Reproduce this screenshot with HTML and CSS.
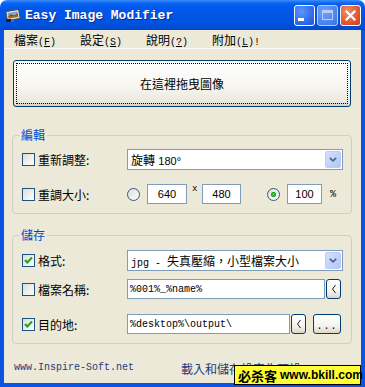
FILE: index.html
```html
<!DOCTYPE html>
<html lang="zh-TW">
<head>
    <meta charset="UTF-8">
    <title>Easy Image Modifier</title>
    <link rel="stylesheet" href="styles.css">
</head>
<body>
    <div class="window">
        <div class="titlebar">
            <svg class="app-icon" viewBox="0 0 16 16">
                <g transform="rotate(-10 8 8)">
                    <rect x="1.5" y="3.5" width="13" height="9" fill="#e9e9e4" stroke="#4a4a4a"/>
                    <rect x="3" y="5" width="10" height="3" fill="#7fa3d8"/>
                    <rect x="3" y="8" width="10" height="3" fill="#a8692c"/>
                    <path d="M3 9 L6 7 L9 9 L13 7 L13 9 Z" fill="#6e4a22"/>
                </g>
                <rect x="1" y="12" width="5" height="3" fill="#222"/>
                <rect x="6" y="13" width="3" height="2" fill="#3a6fd8"/>
            </svg>
            <span class="title">Easy Image Modifier</span>
            <div class="caption-buttons">
                <span class="cap-btn cap-min"><i></i></span>
                <span class="cap-btn cap-max"><i></i></span>
                <span class="cap-btn cap-close">
                    <svg viewBox="0 0 11 11"><path d="M1.5 1.5 L9.5 9.5 M9.5 1.5 L1.5 9.5" stroke="#fff" stroke-width="2.2" stroke-linecap="square"/></svg>
                </span>
            </div>
        </div>

        <div class="frame">
            <div class="menubar">
                <span class="menu-item">檔案<span class="key">(<u>F</u>)</span></span>
                <span class="menu-item">設定<span class="key">(<u>S</u>)</span></span>
                <span class="menu-item">說明<span class="key">(<u>?</u>)</span></span>
                <span class="menu-item">附加<span class="key">(<u>L</u>)!</span></span>
            </div>

            <div class="client">
                <button class="drop-zone"><span>在這裡拖曳圖像</span></button>

                <fieldset class="group group-edit">
                    <legend>編輯</legend>
                    <div class="row row-combo">
                        <label class="opt"><span class="box"></span>重新調整:</label>
                        <div class="combo">
                            <span class="combo-text">旋轉 <span class="num-font">180°</span></span>
                            <span class="combo-btn">
                                <svg viewBox="0 0 8 5"><path d="M0.8 0.8 L4 3.8 L7.2 0.8" fill="none" stroke="#4d6185" stroke-width="1.6"/></svg>
                            </span>
                        </div>
                    </div>
                    <div class="row row-gap">
                        <label class="opt"><span class="box"></span>重調大小:</label>
                        <span class="radio"></span>
                        <span class="field num w-640">640</span>
                        <span class="times">x</span>
                        <span class="field num w-480">480</span>
                        <span class="radio on"></span>
                        <span class="field num w-100">100</span>
                        <span class="unit">%</span>
                    </div>
                </fieldset>

                <fieldset class="group group-save">
                    <legend>儲存</legend>
                    <div class="row row-combo">
                        <label class="opt"><span class="box checked">
                            <svg viewBox="0 0 11 11"><path d="M2 5 L4.3 7.5 L9 2.5" fill="none" stroke="#21a121" stroke-width="2"/></svg>
                        </span>格式:</label>
                        <div class="combo">
                            <span class="combo-text"><span class="mono">jpg - </span>失真壓縮，小型檔案大小</span>
                            <span class="combo-btn">
                                <svg viewBox="0 0 8 5"><path d="M0.8 0.8 L4 3.8 L7.2 0.8" fill="none" stroke="#4d6185" stroke-width="1.6"/></svg>
                            </span>
                        </div>
                    </div>
                    <div class="row row-tight">
                        <label class="opt"><span class="box"></span>檔案名稱:</label>
                        <span class="field text w-name"><span class="mono">%001%_%name%</span></span>
                        <span class="xp-btn arrow-btn">
                            <svg viewBox="0 0 6 10"><path d="M4.5 1 L1.5 5 L4.5 9" fill="none" stroke="#222" stroke-width="1"/></svg>
                        </span>
                    </div>
                    <div class="row row-gap">
                        <label class="opt"><span class="box checked">
                            <svg viewBox="0 0 11 11"><path d="M2 5 L4.3 7.5 L9 2.5" fill="none" stroke="#21a121" stroke-width="2"/></svg>
                        </span>目的地:</label>
                        <span class="field text w-dest"><span class="mono">%desktop%\output\</span></span>
                        <span class="xp-btn arrow-btn">
                            <svg viewBox="0 0 6 10"><path d="M4.5 1 L1.5 5 L4.5 9" fill="none" stroke="#222" stroke-width="1"/></svg>
                        </span>
                        <span class="xp-btn browse-btn">...</span>
                    </div>
                </fieldset>

                <div class="footer">
                    <span class="site">www.Inspire-Soft.net</span>
                    <span class="defaults">載入和儲存設定為預設?</span>
                </div>
            </div>
        </div>

        <div class="watermark"><b class="wm-cn">必杀客</b> <b class="wm-url">www.bkill.com</b></div>
    </div>
</body>
</html>
```

FILE: styles.css
```css
body {
    margin: 0;
    background: #fff;
}
.window {
    position: relative;
    width: 365px;
    height: 387px;
    display: flex;
    flex-direction: column;
    font-family: "Liberation Sans", "Noto Sans CJK TC", sans-serif;
    font-size: 12px;
    color: #000;
}

/* title bar */
.titlebar {
    height: 30px;
    flex: none;
    display: flex;
    align-items: center;
    padding: 0 4px 0 5px;
    border-radius: 7px 7px 0 0;
    background: linear-gradient(to bottom, #3d8ff7 0, #1a72f6 2px, #0560f0 4px, #0058ec 9px, #0055e5 18px, #0051dc 25px, #0049cb 30px);
}
.app-icon {
    width: 16px;
    height: 16px;
    flex: none;
}
.title {
    margin-left: 4px;
    font: bold 13px "Liberation Mono", monospace;
    color: #fff;
    text-shadow: 1px 1px #0b2a8c;
}
.caption-buttons {
    margin-left: auto;
    display: flex;
    gap: 2px;
}
.cap-btn {
    width: 21px;
    height: 21px;
    box-sizing: border-box;
    border: 1px solid #fff;
    border-radius: 3px;
    display: flex;
    align-items: center;
    justify-content: center;
    background: radial-gradient(circle at 35% 30%, #5b95ff, #2a66e8 70%, #1c55d6);
}
.cap-min i {
    width: 6px;
    height: 3px;
    background: #fff;
    margin: 9px 7px 0 0;
}
.cap-max {
    border-color: #b9cdf7;
    background: radial-gradient(circle at 35% 30%, #6fa2fb, #4a80ea 70%, #3b70e0);
}
.cap-max i {
    width: 11px;
    height: 10px;
    box-sizing: border-box;
    border: 1px solid #b9cdf7;
    border-top-width: 3px;
}
.cap-close {
    background: radial-gradient(circle at 35% 30%, #f08e6c, #e0532b 65%, #c8401c);
}
.cap-close svg {
    width: 11px;
    height: 11px;
}

/* frame */
.frame {
    flex: 1;
    display: flex;
    flex-direction: column;
    background: #ece9d8;
    border: 4px solid #0a54e4;
    border-top: 0;
}
.menubar {
    height: 18px;
    flex: none;
    display: flex;
    align-items: center;
    padding-left: 10px;
    border-bottom: 1px solid #fbfaf6;
}
.menu-item {
    width: 66px;
}
.key {
    font: 10px "Liberation Mono", monospace;
}
.client {
    padding: 11px 9px 0 8px;
}

/* drop zone */
.drop-zone {
    display: flex;
    width: calc(100% - 2px);
    height: 47px;
    margin: 0 1px;
    padding: 2px;
    border: 1px solid #003c74;
    border-radius: 3px;
    background: linear-gradient(to bottom, #fff 0, #f7f6f1 55%, #ebe8de 90%, #d9d4c6 100%);
    font: inherit;
    color: #000;
}
.drop-zone span {
    flex: 1;
    display: flex;
    align-items: center;
    justify-content: center;
    border: 1px dotted #000;
    font-family: "Noto Sans CJK TC", sans-serif;
}

/* group boxes */
.group {
    margin: 21px 0 0;
    padding: 7px 8px 9px 9px;
    border: 1px solid #d0d0bf;
    border-radius: 4px;
    min-width: 0;
}
.group-save {
    margin-top: 14px;
    padding-top: 8px;
}
.group legend {
    padding: 0 2px;
    margin-left: -3px;
    line-height: 14px;
    color: #0046d5;
    font-family: "Noto Sans CJK TC", sans-serif;
}
.row {
    display: flex;
    align-items: center;
    height: 20px;
}
.row-combo {
    height: 21px;
}
.row-gap {
    margin-top: 14px;
}
.group-save .row-gap {
    margin-top: 15px;
}
.row-tight {
    margin-top: 8px;
}
.opt {
    width: 105px;
    flex: none;
    display: flex;
    align-items: center;
    gap: 3px;
    font-family: "Noto Sans CJK TC", sans-serif;
}
.box {
    width: 13px;
    height: 13px;
    box-sizing: border-box;
    border: 1px solid #1c5180;
    background: linear-gradient(135deg, #dcdcd7, #fff);
    display: flex;
}
.box svg {
    width: 11px;
    height: 11px;
}
.radio {
    width: 13px;
    height: 13px;
    flex: none;
    box-sizing: border-box;
    border: 1px solid #2f5a86;
    border-radius: 50%;
    background: linear-gradient(135deg, #dcdcd7, #fff);
    margin-right: 7px;
}
.radio.on {
    margin-left: 26px;
    background: radial-gradient(circle, #5ad85a 0, #21a121 2.2px, transparent 3px), linear-gradient(135deg, #dcdcd7, #fff);
}
.combo {
    width: 216px;
    height: 21px;
    box-sizing: border-box;
    border: 1px solid #7f9db9;
    background: #fff;
    display: flex;
    align-items: center;
    padding: 1px 1px 1px 3px;
}
.combo-text {
    flex: 1;
    white-space: nowrap;
}
.combo-btn {
    width: 16px;
    height: 17px;
    box-sizing: border-box;
    border: 1px solid #b9cdf8;
    border-radius: 2px;
    background: linear-gradient(135deg, #d4e1fd, #b3c7f4);
    display: flex;
    align-items: center;
    justify-content: center;
}
.combo-btn svg {
    width: 8px;
    height: 5px;
}
.num-font {
    font: 11px "Liberation Sans", sans-serif;
}
.mono {
    font: 10px "Liberation Mono", monospace;
}
.field {
    height: 20px;
    flex: none;
    box-sizing: border-box;
    border: 1px solid #7f9db9;
    background: #fff;
    display: flex;
    align-items: center;
}
.num {
    justify-content: center;
    font-size: 11px;
}
.text {
    padding-left: 2px;
}
.w-640 { width: 40px; }
.w-480 { width: 39px; }
.w-100 { width: 35px; }
.w-name { width: 198px; }
.w-dest { width: 163px; }
.times {
    align-self: flex-start;
    width: 6px;
    margin: 0 4px 0 5px;
    font: 9px "Liberation Mono", monospace;
}
.unit {
    margin-left: 8px;
    font: 10px "Liberation Mono", monospace;
}
.xp-btn {
    height: 20px;
    box-sizing: border-box;
    border: 1px solid #003c74;
    border-radius: 3px;
    background: linear-gradient(to bottom, #fff 0, #f4f3ee 60%, #dcd7c8 100%);
    display: flex;
    align-items: center;
    justify-content: center;
}
.arrow-btn {
    width: 15px;
    margin-left: 1px;
}
.arrow-btn svg {
    width: 6px;
    height: 10px;
}
.browse-btn {
    width: 28px;
    margin-left: 7px;
    padding-top: 4px;
    font: 10px "Liberation Mono", monospace;
    letter-spacing: 1px;
}

/* footer */
.footer {
    display: flex;
    margin-top: 18px;
    padding-left: 2px;
    line-height: 14px;
    color: #24397f;
}
.site {
    width: 167px;
    font: 10px "Liberation Mono", monospace;
}
.defaults {
    font-family: "Noto Sans CJK TC", sans-serif;
}

/* overlay stamp */
.watermark {
    position: absolute;
    left: 234px;
    top: 365px;
    width: 127px;
    height: 20px;
    box-sizing: border-box;
    border: 1px solid #000;
    background: #ffff33;
    display: flex;
    align-items: center;
    padding-left: 3px;
    gap: 3px;
    white-space: nowrap;
}
.wm-cn {
    font: bold 13px "Noto Sans CJK SC", sans-serif;
}
.wm-url {
    font: bold 12px "Liberation Sans", sans-serif;
}
```
